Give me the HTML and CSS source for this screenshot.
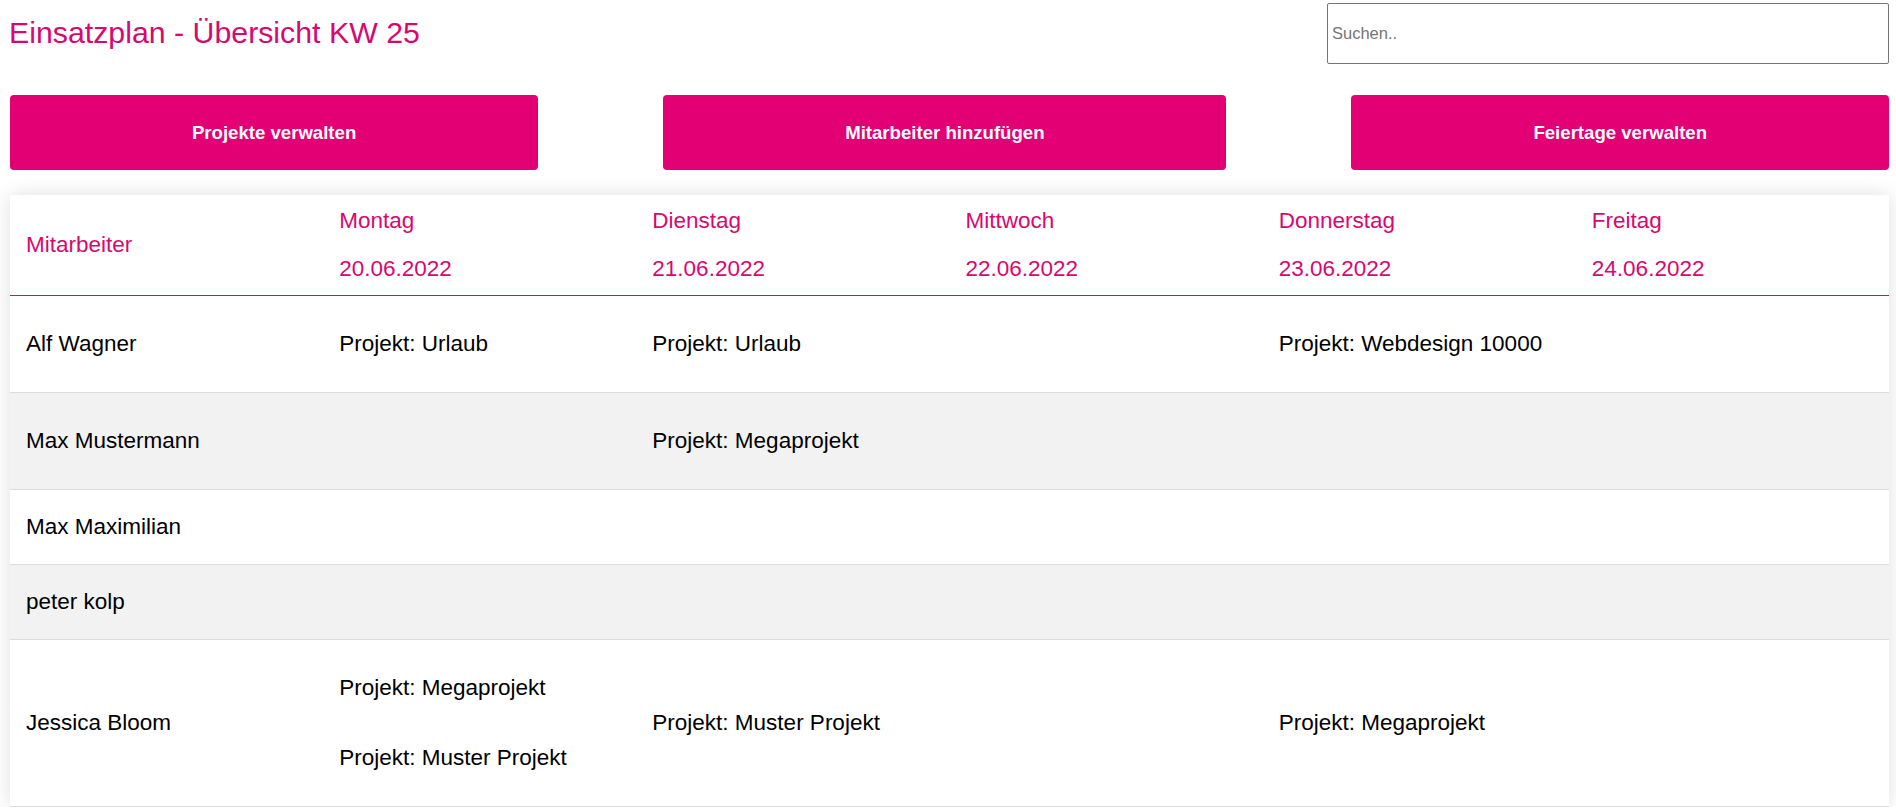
FILE: index.html
```html
<!DOCTYPE html>
<html lang="de">
<head>
<meta charset="utf-8">
<title>Einsatzplan - Übersicht KW 25</title>
<link rel="stylesheet" href="styles.css">
</head>
<body>
<div class="page">
  <header class="topbar">
    <h1 class="title">Einsatzplan - Übersicht KW 25</h1>
    <input class="search" type="text" placeholder="Suchen..">
  </header>

  <nav class="actions">
    <button class="action-btn">Projekte verwalten</button>
    <button class="action-btn">Mitarbeiter hinzufügen</button>
    <button class="action-btn">Feiertage verwalten</button>
  </nav>

  <section class="plan">
    <div class="row head-row">
      <div class="cell head-cell head-name">Mitarbeiter</div>
      <div class="cell head-cell"><div class="line">Montag</div><div class="line">20.06.2022</div></div>
      <div class="cell head-cell"><div class="line">Dienstag</div><div class="line">21.06.2022</div></div>
      <div class="cell head-cell"><div class="line">Mittwoch</div><div class="line">22.06.2022</div></div>
      <div class="cell head-cell"><div class="line">Donnerstag</div><div class="line">23.06.2022</div></div>
      <div class="cell head-cell"><div class="line">Freitag</div><div class="line">24.06.2022</div></div>
    </div>

    <div class="row">
      <div class="cell name">Alf Wagner</div>
      <div class="cell"><div class="proj">Projekt: Urlaub</div></div>
      <div class="cell"><div class="proj">Projekt: Urlaub</div></div>
      <div class="cell"></div>
      <div class="cell"><div class="proj">Projekt: Webdesign 10000</div></div>
      <div class="cell"></div>
    </div>

    <div class="row alt">
      <div class="cell name">Max Mustermann</div>
      <div class="cell"></div>
      <div class="cell"><div class="proj">Projekt: Megaprojekt</div></div>
      <div class="cell"></div>
      <div class="cell"></div>
      <div class="cell"></div>
    </div>

    <div class="row">
      <div class="cell name">Max Maximilian</div>
      <div class="cell"></div>
      <div class="cell"></div>
      <div class="cell"></div>
      <div class="cell"></div>
      <div class="cell"></div>
    </div>

    <div class="row alt">
      <div class="cell name">peter kolp</div>
      <div class="cell"></div>
      <div class="cell"></div>
      <div class="cell"></div>
      <div class="cell"></div>
      <div class="cell"></div>
    </div>

    <div class="row">
      <div class="cell name">Jessica Bloom</div>
      <div class="cell"><div class="proj">Projekt: Megaprojekt</div><div class="proj">Projekt: Muster Projekt</div></div>
      <div class="cell"><div class="proj">Projekt: Muster Projekt</div></div>
      <div class="cell"></div>
      <div class="cell"><div class="proj">Projekt: Megaprojekt</div></div>
      <div class="cell"></div>
    </div>
  </section>
</div>
</body>
</html>
```

FILE: styles.css
```css
* { box-sizing: border-box; }

html, body {
  margin: 0;
  padding: 0;
  background: #ffffff;
}

body {
  font-family: "Liberation Sans", Arial, sans-serif;
  color: #000;
}

.page {
  padding: 3px 7px 0 10px;
}

.topbar {
  display: flex;
  justify-content: space-between;
  align-items: flex-start;
}

.title {
  margin: 13px 0 0 -1px;
  font-size: 30.3px;
  font-weight: normal;
  line-height: 34px;
  color: #d5096f;
}

.search {
  width: 562px;
  height: 61px;
  margin: 0;
  padding: 1px 4px;
  border: 1px solid #767676;
  border-radius: 2px;
  font-family: "Liberation Sans", Arial, sans-serif;
  font-size: 16.5px;
  color: #000;
  background: #fff;
}

.search::placeholder {
  color: #757575;
}

.actions {
  display: flex;
  gap: 125px;
  margin-top: 31px;
}

.action-btn {
  flex: 1 1 auto;
  height: 75px;
  padding: 0;
  border: none;
  border-radius: 4px;
  background: #e20074;
  color: #fff;
  font-family: "Liberation Sans", Arial, sans-serif;
  font-size: 18.6px;
  font-weight: bold;
}

.plan {
  margin-top: 25px;
  background: #fff;
  box-shadow: 0 0 18px rgba(0, 0, 0, 0.13);
}

.row {
  display: grid;
  grid-template-columns: repeat(6, 1fr);
  align-items: center;
  border-bottom: 1px solid #dcdcdc;
  background: #fff;
}

.row.alt {
  background: #f2f2f2;
}

.head-row {
  border-bottom: 1px solid #d5096f;
}

.cell {
  padding: 13px 16px;
  font-size: 22.5px;
  line-height: 48px;
  display: flex;
  flex-direction: column;
  justify-content: center;
}

.head-cell {
  padding: 2px 16px;
  color: #d5096f;
}

.line {
  line-height: 48px;
}

.proj {
  padding: 11px 0;
  line-height: 48px;
}
```
